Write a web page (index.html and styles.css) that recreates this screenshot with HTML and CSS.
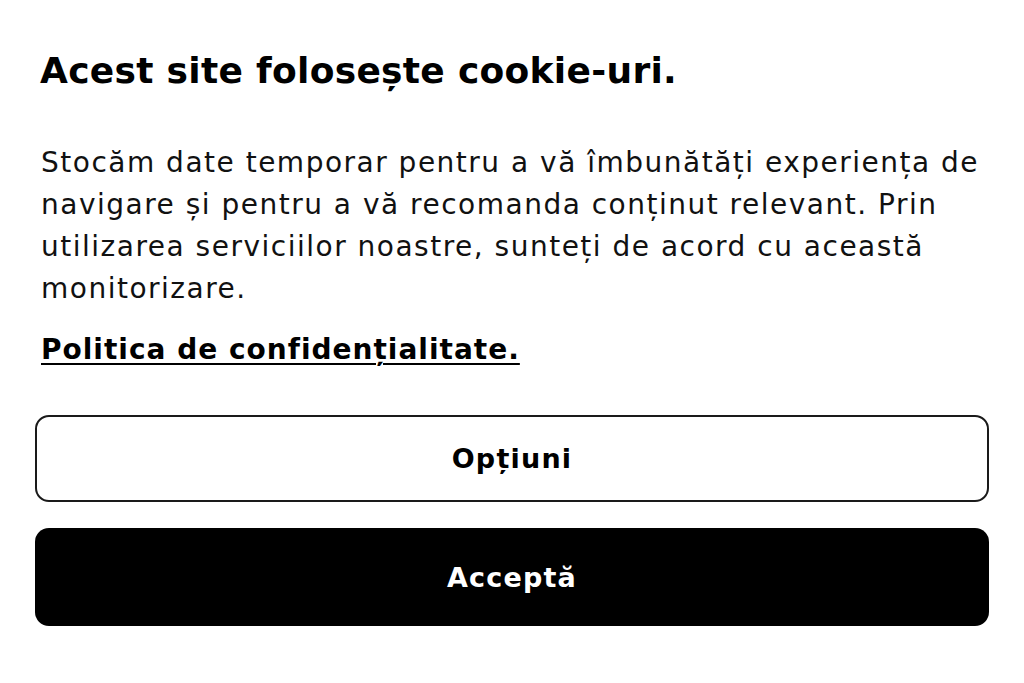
FILE: index.html
```html
<!DOCTYPE html>
<html lang="ro">
	<head>
		<meta charset="utf-8">
		<title>Cookie-uri</title>
		<link rel="stylesheet" href="styles.css">
	</head>
	<body>
		<div class="cookie-box">
			<h1 class="cookie-title">Acest site folosește cookie-uri.</h1>
			<p class="cookie-text">Stocăm date temporar pentru a vă îmbunătăți experiența de navigare și pentru a vă recomanda conținut relevant. Prin utilizarea serviciilor noastre, sunteți de acord cu această monitorizare.</p>
			<a class="cookie-link" href="#">Politica de confidențialitate.</a>

			<div class="cookie-actions">
				<button class="btn btn-outline">Opțiuni</button>
				<button class="btn btn-dark">Acceptă</button>
			</div>
		</div>
	</body>
</html>
```
FILE: styles.css
```css
body {
	margin: 0;
	padding: 0;
	background: #fff;
	font-family: "DejaVu Sans", sans-serif;
	color: #111;
}

.cookie-box {
	padding: 49px 35px 0 35px;
}

.cookie-title {
	margin: 0;
	padding: 0 5px;
	font-size: 36px;
	line-height: 44px;
	font-weight: 700;
	letter-spacing: 0.3px;
	color: #000;
}

.cookie-text {
	margin: 49px 0 0 0;
	padding: 0 5px 0 6px;
	font-size: 28px;
	line-height: 42px;
	letter-spacing: 1.5px;
}

.cookie-link {
	display: block;
	margin-top: 19px;
	padding: 0 5px 0 6px;
	font-size: 28px;
	line-height: 42px;
	font-weight: 700;
	letter-spacing: 1px;
	color: #000;
	text-decoration: underline;
	text-decoration-thickness: 2px;
	text-underline-offset: 4px;
}

.cookie-actions {
	display: flex;
	flex-direction: column;
	gap: 26px;
	margin-top: 44px;
}

.btn {
	display: block;
	width: 100%;
	border-radius: 14px;
	font-family: "DejaVu Sans", sans-serif;
	font-size: 27px;
	font-weight: 700;
	letter-spacing: 1.2px;
	cursor: pointer;
}

.btn-outline {
	height: 87px;
	background: #fff;
	color: #000;
	border: 2px solid #1a1a1a;
}

.btn-dark {
	height: 98px;
	background: #000;
	color: #fff;
	border: none;
}
```
